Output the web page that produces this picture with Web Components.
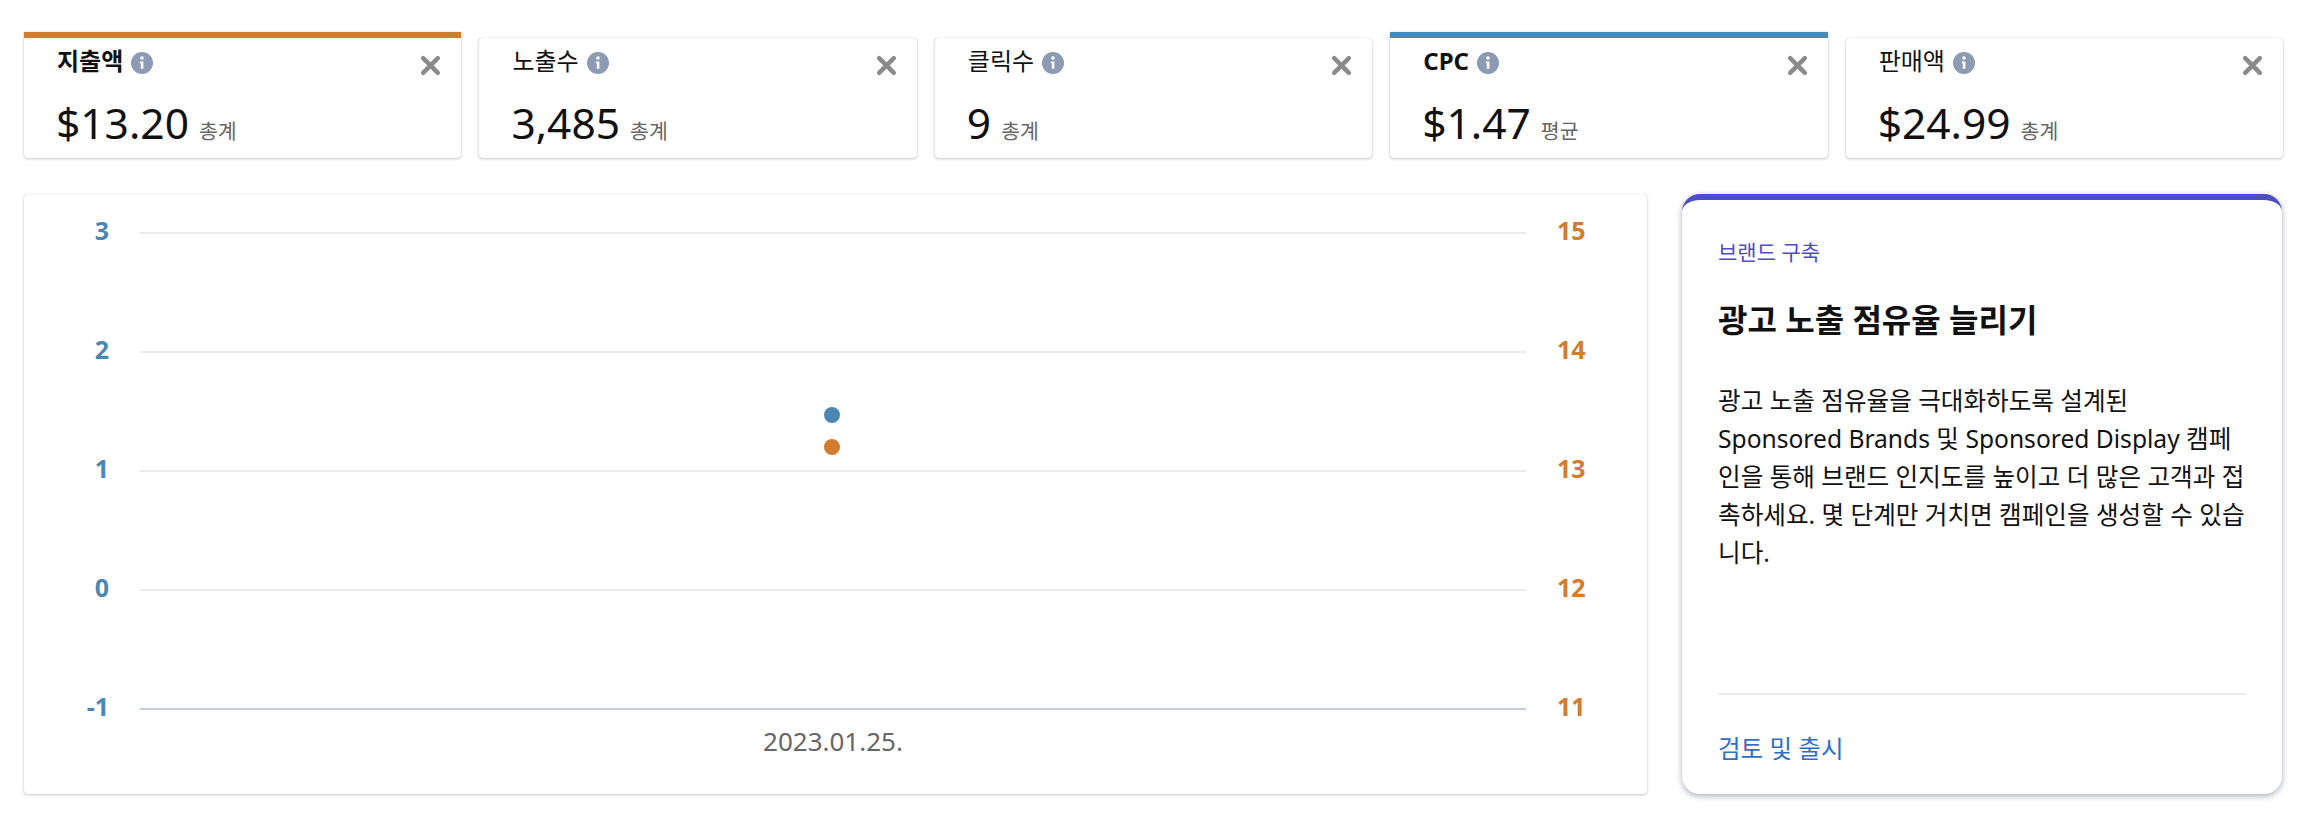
<!DOCTYPE html>
<html lang="ko">
<head>
<meta charset="utf-8">
<title>캠페인 지표</title>
<style>
  html, body { margin: 0; background: #fff; }
  body { font-family: "Noto Sans", "Noto Sans CJK KR", sans-serif; color: #111; }
  .page { padding: 32px 33px 20px 24px; display: flex; flex-direction: column; gap: 36px; }
  .metrics { display: flex; align-items: flex-end; gap: 18px; }
  .main { display: flex; gap: 35px; align-items: stretch; }
</style>
</head>
<body>
<div class="page">
  <div class="metrics">
    <metric-tile label="지출액" value="$13.20" unit="총계" accent="#d17c2e"></metric-tile>
    <metric-tile label="노출수" value="3,485" unit="총계"></metric-tile>
    <metric-tile label="클릭수" value="9" unit="총계"></metric-tile>
    <metric-tile label="CPC" value="$1.47" unit="평균" accent="#4a88b3"></metric-tile>
    <metric-tile label="판매액" value="$24.99" unit="총계"></metric-tile>
  </div>
  <div class="main">
    <trend-chart date="2023.01.25."></trend-chart>
    <promo-card category="브랜드 구축" heading="광고 노출 점유율 늘리기" action="검토 및 출시">
      광고 노출 점유율을 극대화하도록 설계된 Sponsored Brands 및 Sponsored Display 캠페인을 통해 브랜드 인지도를 높이고 더 많은 고객과 접촉하세요. 몇 단계만 거치면 캠페인을 생성할 수 있습니다.
    </promo-card>
  </div>
</div>

<script>
  const FONT = '"Noto Sans", "Noto Sans CJK KR", sans-serif';

  // 상단 지표 카드
  class MetricTile extends HTMLElement {
    constructor() {
      super();
      this.attachShadow({ mode: "open" });
    }

    connectedCallback() {
      const accent = this.getAttribute("accent");
      this.shadowRoot.innerHTML = `
        <style>
          :host {
            display: block;
            flex: 1 1 0;
            min-width: 0;
            box-sizing: border-box;
            height: ${accent ? "126px" : "120px"};
            background: #fff;
            border-radius: 4px;
            border-top: ${accent ? `6px solid ${accent}` : "0"};
            ${accent ? "border-top-left-radius: 0; border-top-right-radius: 0;" : ""}
            box-shadow: 0 0 1px rgba(0, 0, 0, .3), 0 1px 3px rgba(0, 0, 0, .2);
            font-family: ${FONT};
          }
          .box { padding: 5px 20px 0 32px; }
          .head { display: flex; align-items: center; height: 40px; }
          .label { font-size: 24px; line-height: 40px; font-weight: ${accent ? 700 : 400}; color: #111; margin-top: -4px; margin-left: 1px; }
          .info { margin-left: 8px; width: 22px; height: 22px; flex: none; }
          .close { margin-left: auto; width: 21px; height: 21px; flex: none; margin-top: 5px; }
          .figure { display: flex; align-items: baseline; margin-top: 14px; }
          .value { font-size: 42.5px; line-height: 52px; color: #111; }
          .unit { font-size: 20.5px; color: #666; margin-left: 10px; }
        </style>
        <div class="box">
          <div class="head">
            <span class="label">${this.getAttribute("label")}</span>
            <svg class="info" viewBox="0 0 22 22">
              <circle cx="11" cy="11" r="11" fill="#8c9ab3"/>
              <circle cx="11" cy="6" r="1.8" fill="#fff"/>
              <path d="M8.8 9.4h3.6v7.4h-2.6v-5.6H8.8z" fill="#fff"/>
            </svg>
            <svg class="close" viewBox="0 0 20 20">
              <path d="M3 3L17 17M17 3L3 17" stroke="#8a8a8a" stroke-width="4.2" stroke-linecap="round" fill="none"/>
            </svg>
          </div>
          <div class="figure">
            <span class="value">${this.getAttribute("value")}</span>
            <span class="unit">${this.getAttribute("unit")}</span>
          </div>
        </div>
      `;
    }
  }
  customElements.define("metric-tile", MetricTile);

  // 이중 축 차트
  class TrendChart extends HTMLElement {
    constructor() {
      super();
      this.attachShadow({ mode: "open" });
    }

    connectedCallback() {
      const left = ["3", "2", "1", "0", "-1"];
      const right = ["15", "14", "13", "12", "11"];
      const rows = left.map((l, i) => `
        <div class="row">
          <span class="l">${l}</span>
          <span class="line ${i === left.length - 1 ? "base" : ""}"></span>
          <span class="r">${right[i]}</span>
        </div>`).join("");
      this.shadowRoot.innerHTML = `
        <style>
          :host {
            display: block;
            position: relative;
            width: 1623px;
            height: 600px;
            flex: none;
            background: #fff;
            border-radius: 4px;
            box-shadow: 0 0 1px rgba(0, 0, 0, .3), 0 1px 3px rgba(0, 0, 0, .2);
            font-family: ${FONT};
          }
          .plot { display: flex; flex-direction: column; gap: 95px; padding-top: 27px; }
          .row {
            display: grid;
            grid-template-columns: 85px 1386px 60px;
            column-gap: 31px;
            align-items: center;
            height: 24px;
          }
          .l, .r { font-size: 25px; font-weight: 700; line-height: 24px; margin-top: -7px; }
          .l { color: #4a88b3; text-align: right; }
          .r { color: #d17c2e; }
          .line { height: 2px; background: #ebebeb; }
          .line.base { background: #c3cfe0; }
          .date { margin: 4px 0 0 116px; width: 1386px; text-align: center; font-size: 26px; line-height: 32px; color: #666; }
          .dot { position: absolute; left: 800px; width: 16px; height: 16px; border-radius: 50%; }
          .dot.cpc { top: 213px; background: #4a88b3; }
          .dot.spend { top: 245px; background: #d17c2e; }
        </style>
        <div class="plot">${rows}</div>
        <div class="date">${this.getAttribute("date")}</div>
        <span class="dot cpc"></span>
        <span class="dot spend"></span>
      `;
    }
  }
  customElements.define("trend-chart", TrendChart);

  // 오른쪽 추천 카드
  class PromoCard extends HTMLElement {
    constructor() {
      super();
      this.attachShadow({ mode: "open" });
    }

    connectedCallback() {
      this.shadowRoot.innerHTML = `
        <style>
          :host {
            display: flex;
            flex-direction: column;
            box-sizing: border-box;
            width: 600px;
            height: 600px;
            flex: none;
            padding: 0 36px;
            background: #fff;
            border-top: 6px solid #4e4ec4;
            border-radius: 18px;
            box-shadow: 0 2px 6px rgba(40, 50, 80, .4);
            font-family: ${FONT};
          }
          .category { margin-top: 37px; font-size: 21px; line-height: 30px; color: #4e4ec4; }
          h2 { margin: 30px 0 0; font-size: 32px; line-height: 46px; font-weight: 700; color: #111; }
          .body { margin-top: 39px; font-size: 24.6px; line-height: 38px; color: #111; }
          .foot { margin-top: auto; border-top: 2px solid #e9ebed; padding: 36px 0 27px; }
          a { display: block; font-size: 24.5px; line-height: 36px; color: #2f6fc2; text-decoration: none; }
        </style>
        <div class="category">${this.getAttribute("category")}</div>
        <h2>${this.getAttribute("heading")}</h2>
        <div class="body"><slot></slot></div>
        <div class="foot"><a href="#">${this.getAttribute("action")}</a></div>
      `;
    }
  }
  customElements.define("promo-card", PromoCard);
</script>
</body>
</html>
